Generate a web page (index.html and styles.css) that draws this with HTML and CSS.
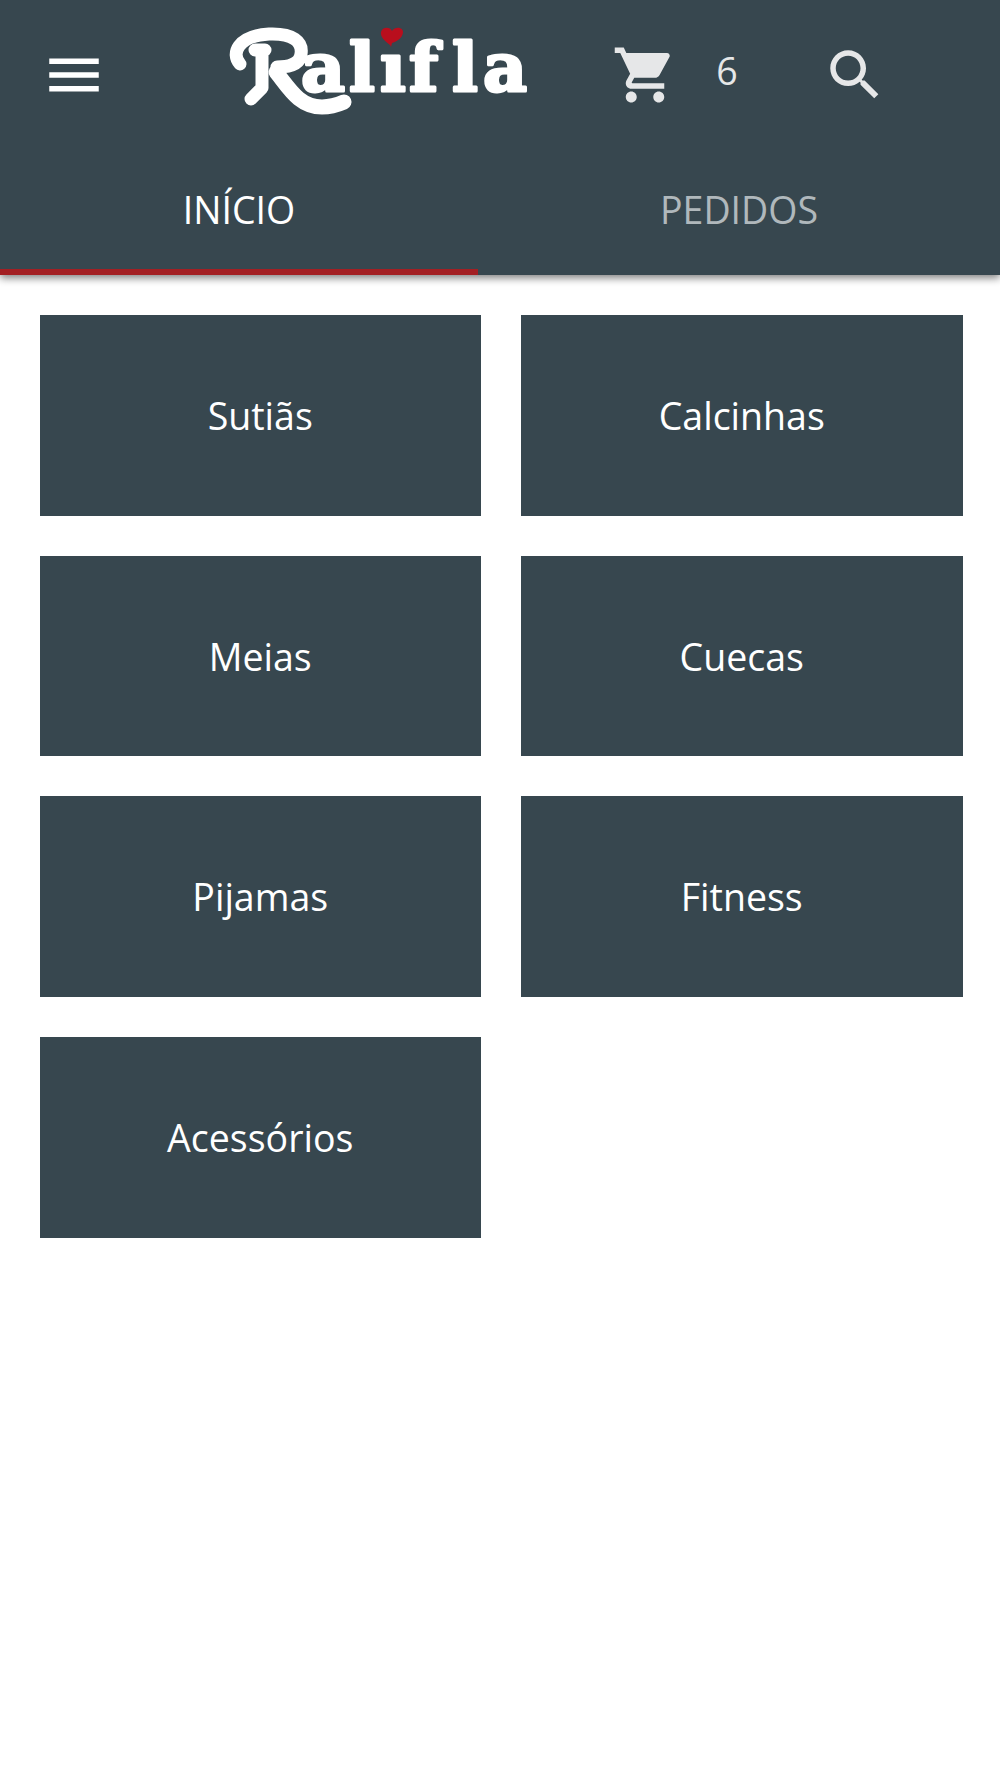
FILE: index.html
```html
<!DOCTYPE html>
<html lang="pt">
<head>
<meta charset="utf-8">
<title>Ralifla</title>
<link rel="stylesheet" href="styles.css">
</head>
<body>
<header class="header">
  <div class="toolbar">
    <svg class="icon icon-menu" viewBox="0 0 24 24"><path d="M3 18h18v-2H3v2zm0-5h18v-2H3v2zm0-7v2h18V6H3z"/></svg>
    <svg class="logo" viewBox="0 0 310 95" role="img" aria-label="Ralifla">
      <path class="logo-tail" d="M49 46 C62 62 72 81 95 81 C104 81 110 79 117 76"/>
      <path class="logo-arc" d="M13 38 C4 28 10 10 42 8 C66 7 76 16 74 28 C73 38 62 41 50 41"/>
      <path class="logo-leg" d="M28 24 L38 24 M35 24 L35 62 L24 73"/>
      <text class="logo-letter" x="74" y="65">a</text>
      <text class="logo-letter" x="122" y="65">l</text>
      <text class="logo-letter" x="153" y="65">ı</text>
      <text class="logo-letter" x="182" y="65">f</text>
      <text class="logo-letter" x="225" y="65">l</text>
      <text class="logo-letter" x="256" y="65">a</text>
      <path class="logo-heart" d="M163 19 C158 15 153 11 154 6 C155 1 163 0 165 5 C168 0 176 1 176 6 C176 11 171 15 165 17 L164 21 Z"/>
    </svg>
    <svg class="icon icon-cart" viewBox="0 0 24 24"><path d="M7 18c-1.1 0-1.99.9-1.99 2S5.9 22 7 22s2-.9 2-2-.9-2-2-2zM1 2v2h2l3.6 7.59-1.35 2.45c-.16.28-.25.61-.25.96 0 1.1.9 2 2 2h12v-2H7.42c-.14 0-.25-.11-.25-.25l.03-.12.9-1.63h7.45c.75 0 1.41-.41 1.75-1.03l3.58-6.49c.08-.14.12-.31.12-.48 0-.55-.45-1-1-1H5.21l-.94-2H1zm16 16c-1.1 0-1.99.9-1.99 2s.89 2 1.99 2 2-.9 2-2-.9-2-2-2z"/></svg>
    <span class="count">6</span>
    <svg class="icon icon-search" viewBox="0 0 24 24"><path d="M15.5 14h-.79l-.28-.27C15.41 12.59 16 11.11 16 9.5 16 5.91 13.09 3 9.5 3S3 5.91 3 9.5 5.91 16 9.5 16c1.61 0 3.09-.59 4.23-1.57l.27.28v.79l5 4.99L20.49 19l-4.99-5zm-6 0C7.01 14 5 11.99 5 9.5S7.01 5 9.5 5 14 7.01 14 9.5 11.99 14 9.5 14z"/></svg>
  </div>
  <nav class="tabs">
    <a class="tab tab-active">INÍCIO</a>
    <a class="tab tab-other">PEDIDOS</a>
  </nav>
</header>
<main class="grid">
  <a class="card">Sutiãs</a>
  <a class="card">Calcinhas</a>
  <a class="card">Meias</a>
  <a class="card">Cuecas</a>
  <a class="card">Pijamas</a>
  <a class="card">Fitness</a>
  <a class="card">Acessórios</a>
</main>
</body>
</html>
```
FILE: styles.css
```css
* { box-sizing: border-box; }
html, body { margin: 0; padding: 0; background: #fff; }
body { font-family: "Open Sans", "Liberation Sans", sans-serif; height: 1778px; overflow: hidden; }
.header { background: #37474f; height: 275px; display: flex; flex-direction: column; box-shadow: 0 3px 8px rgba(0,0,0,.5); }
.toolbar { height: 145px; display: flex; align-items: flex-start; padding-top: 42px; }
.icon { width: 66px; height: 66px; flex: none; display: block; }
.icon-menu { margin-left: 41px; fill: #fff; }
.icon-cart { margin-left: 75px; fill: #e6e7e8; }
.icon-search { margin-left: 60px; fill: #e6e7e8; }
.logo { width: 310px; height: 95px; flex: none; margin-left: 120px; margin-top: -16px; }
.logo-letter { font-family: "DejaVu Serif", serif; font-weight: 700; font-size: 68px; fill: #fff; stroke: #fff; stroke-width: 3px; stroke-linejoin: round; }
.logo-arc, .logo-tail, .logo-leg { fill: none; stroke: #fff; stroke-linecap: round; stroke-linejoin: round; }
.logo-arc { stroke-width: 13px; }
.logo-tail { stroke-width: 15px; }
.logo-leg { stroke-width: 13px; }
.logo-heart { fill: #b90e1d; }
.count { width: 70px; margin-left: 14px; margin-top: 5px; text-align: center; font-size: 37.5px; line-height: 48px; color: #e6e7e8; }
.tabs { flex: 1; display: flex; }
.tab { display: flex; align-items: center; justify-content: center; font-size: 37.5px; padding-bottom: 2px; }
.tab-active { width: 478px; color: #fff; border-bottom: 6px solid #a31f23; padding-top: 6px; }
.tab-other { flex: 1; color: #b0b8bc; }
.grid { display: grid; grid-template-columns: 441.5px 441.5px; grid-auto-rows: 200.7px; gap: 40px; padding: 40px 0 0 39.5px; }
.card { background: #37474f; color: #fff; font-size: 37.5px; display: flex; align-items: center; justify-content: center; }
```
